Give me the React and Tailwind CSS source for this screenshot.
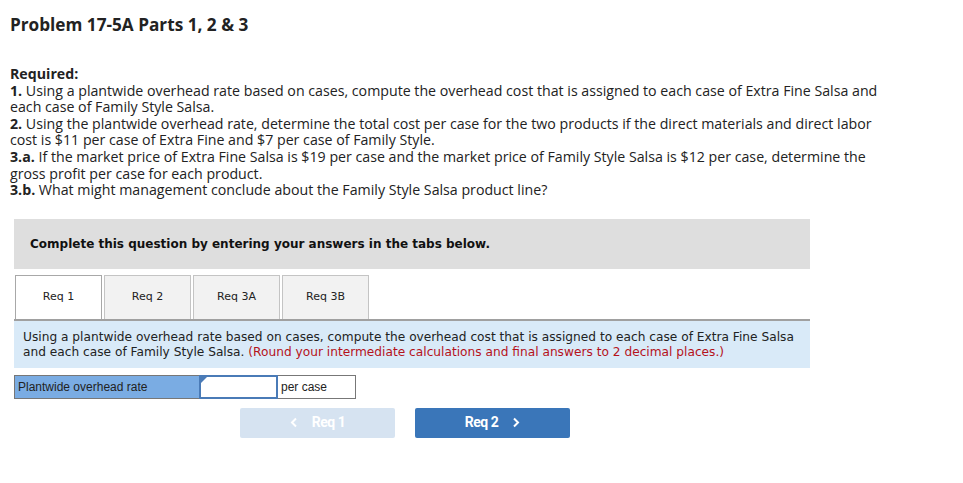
import React from 'react';

const tabs = ['Req 1', 'Req 2', 'Req 3A', 'Req 3B'];

const App = () => {
    return (
        <div className="bg-white w-[963px] h-[483px] overflow-hidden text-[#222]" style={{ fontFamily: '"Open Sans", Lato, sans-serif' }}>
            <div className="pl-[10px] pt-[14px]">
                <h1 className="text-[17.2px] font-bold leading-[22px] text-[#222]">Problem 17-5A Parts 1, 2 &amp; 3</h1>

                <div className="mt-[30px] w-[900px] text-[14.2px] leading-[16.6px] whitespace-nowrap">
                    <p className="font-bold">Required:</p>
                    <p><strong>1.</strong> Using a plantwide overhead rate based on cases, compute the overhead cost that is assigned to each case of Extra Fine Salsa and<br />each case of Family Style Salsa.</p>
                    <p><strong>2.</strong> Using the plantwide overhead rate, determine the total cost per case for the two products if the direct materials and direct labor<br />cost is $11 per case of Extra Fine and $7 per case of Family Style.</p>
                    <p><strong>3.a.</strong> If the market price of Extra Fine Salsa is $19 per case and the market price of Family Style Salsa is $12 per case, determine the<br />gross profit per case for each product.</p>
                    <p><strong>3.b.</strong> What might management conclude about the Family Style Salsa product line?</p>
                </div>
            </div>

            <div className="ml-[14px] mt-[20px] w-[796px]" style={{ fontFamily: '"DejaVu Sans", Verdana, sans-serif' }}>
                <div className="bg-[#dedede] h-[50px] flex items-center pl-[16px]">
                    <p className="text-[12px] font-bold text-[#111]">Complete this question by entering your answers in the tabs below.</p>
                </div>

                <div className="mt-[6px] flex gap-[2px] pl-[1px] border-b-2 border-[#a0a0a0]">
                    {tabs.map((t, i) => (
                        <div
                            key={t}
                            className={
                                i === 0
                                    ? 'w-[87px] h-[44px] -mb-[2px] bg-white border border-b-0 border-[#a8a8a8] flex items-center justify-center text-[11px] text-[#222]'
                                    : 'w-[87px] h-[44px] bg-[#f2f2f2] border border-b-0 border-[#c4c4c4] flex items-center justify-center text-[11px] text-[#222]'
                            }
                        >
                            {t}
                        </div>
                    ))}
                </div>

                <div className="bg-[#d9eaf8] px-[9px] pt-[9px] pb-[8px] text-[12.2px] leading-[15px] text-[#222]">
                    Using a plantwide overhead rate based on cases, compute the overhead cost that is assigned to each case of Extra Fine Salsa and each case of Family Style Salsa. <span className="text-[#b5121b]">(Round your intermediate calculations and final answers to 2 decimal places.)</span>
                </div>

                <div className="mt-[7px] flex h-[24px]" style={{ fontFamily: '"Liberation Sans", Arial, sans-serif' }}>
                    <div className="w-[186px] bg-[#7aace3] border border-[#777] flex items-center pl-[3px] text-[12px] text-[#222]">
                        Plantwide overhead rate
                    </div>
                    <div className="relative w-[79px] bg-white border-2 border-[#4a7bb7] -ml-[1px]">
                        <div className="absolute left-0 top-0 w-0 h-0 border-t-[6px] border-r-[6px] border-t-[#4a7bb7] border-r-transparent" />
                    </div>
                    <div className="w-[79px] border border-[#777] -ml-[1px] flex items-center pl-[3px] text-[12px] text-[#222]">
                        per case
                    </div>
                </div>

                <div className="mt-[9px] flex gap-[20px] pl-[226px]" style={{ fontFamily: 'Roboto, "Liberation Sans", sans-serif' }}>
                    <button className="w-[155px] h-[30px] rounded-[2px] bg-[#d6e3f1] text-white font-bold text-[14px] flex items-center justify-center gap-[14px] tracking-[-0.5px]">
                        <svg width="8" height="11" viewBox="0 0 8 11"><path d="M6 1.5 L2 5.5 L6 9.5" fill="none" stroke="white" strokeWidth="2" /></svg>
                        Req 1
                    </button>
                    <button className="w-[155px] h-[30px] rounded-[2px] bg-[#3a76b9] text-white font-bold text-[14px] flex items-center justify-center gap-[14px] tracking-[-0.5px]">
                        Req 2
                        <svg width="8" height="11" viewBox="0 0 8 11"><path d="M2 1.5 L6 5.5 L2 9.5" fill="none" stroke="white" strokeWidth="2" /></svg>
                    </button>
                </div>
            </div>
        </div>
    );
};

export default App;
